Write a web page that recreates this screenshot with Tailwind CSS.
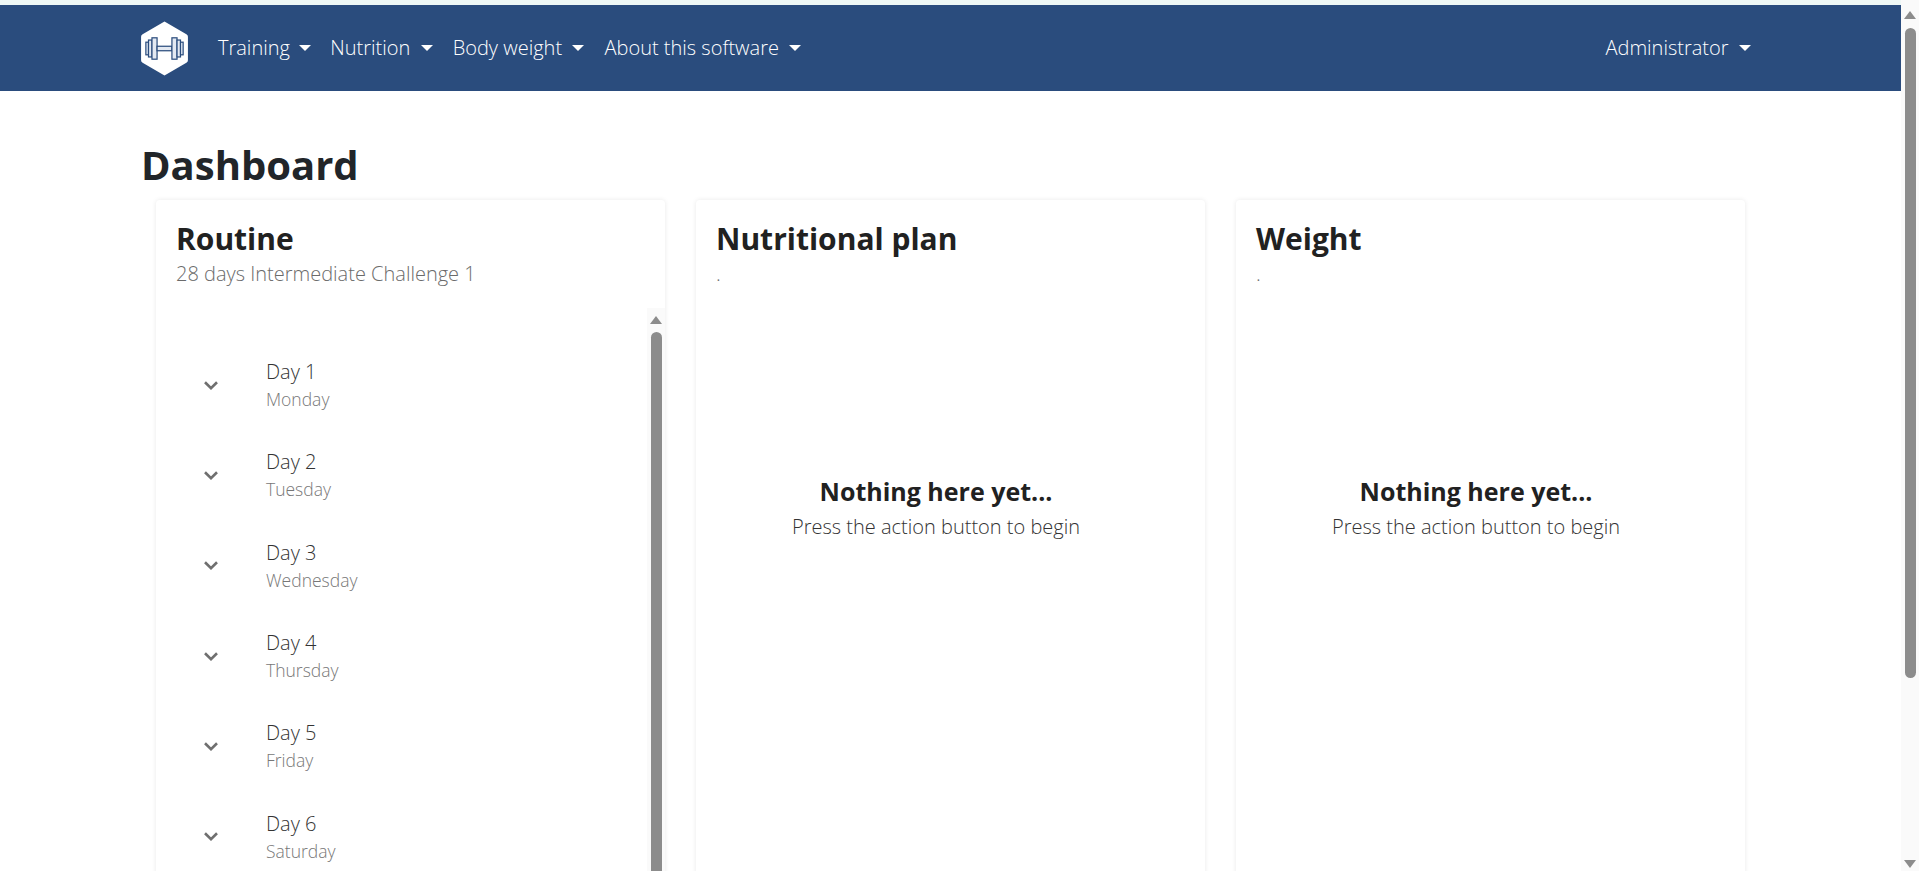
<!DOCTYPE html>
<html lang="en">
<head>
<meta charset="utf-8">
<title>Dashboard</title>
<script src="https://cdn.jsdelivr.net/npm/@tailwindcss/browser@4"></script>
</head>
<body class="h-[871px] w-[1919px] overflow-hidden bg-white font-['Open_Sans',sans-serif] text-[#212529]">
<div class="flex h-[871px] w-[1919px] overflow-hidden">
  <div class="flex h-[871px] w-[1901px] flex-col overflow-hidden">
    <div class="h-[5px] shrink-0 bg-[#eef7f5]"></div>
    <nav class="flex h-[86px] shrink-0 items-center bg-[#2a4c7d] pl-[141px] pr-[150px] text-[20px] font-light text-white">
      <svg class="mr-[30px] h-[55px] w-[47px] shrink-0" viewBox="0 0 46 54">
        <path d="M23 0.5 L44.500 13 Q46 13.800 46 15.500 V38.500 Q46 40.200 44.500 41 L23 53.500 L1.500 41 Q0 40.200 0 38.500 V15.500 Q0 13.800 1.500 13 Z" fill="#fff"/>
        <g fill="#e3e9f2" stroke="#2a4c7d" stroke-width="1.2">
          <rect x="4.700" y="20.800" width="2.600" height="12.400"/>
          <rect x="7.300" y="18.700" width="3.400" height="16.600"/>
          <rect x="10.700" y="16.500" width="5" height="21"/>
          <rect x="15.700" y="24.800" width="14.600" height="4.400"/>
          <rect x="30.300" y="16.500" width="5" height="21"/>
          <rect x="35.300" y="18.700" width="3.400" height="16.600"/>
          <rect x="38.700" y="20.800" width="2.600" height="12.400"/>
        </g>
      </svg>
      <a class="flex items-center">Training<span class="ml-[9.4px] h-0 w-0 border-x-[6px] border-t-[6px] border-x-transparent border-t-white"></span></a>
      <a class="ml-[19px] flex items-center">Nutrition<span class="ml-[10.4px] h-0 w-0 border-x-[6px] border-t-[6px] border-x-transparent border-t-white"></span></a>
      <a class="ml-[20px] flex items-center">Body weight<span class="ml-[10.4px] h-0 w-0 border-x-[6px] border-t-[6px] border-x-transparent border-t-white"></span></a>
      <a class="ml-[20px] flex items-center">About this software<span class="ml-[10.4px] h-0 w-0 border-x-[6px] border-t-[6px] border-x-transparent border-t-white"></span></a>
      <a class="ml-auto flex items-center">Administrator<span class="ml-[10.5px] h-0 w-0 border-x-[6px] border-t-[6px] border-x-transparent border-t-white"></span></a>
    </nav>
    <main class="flex min-h-0 flex-1 flex-col pl-[141px]">
      <h1 class="mt-[50px] h-[59px] shrink-0 text-[40px] font-bold leading-[48px]">Dashboard</h1>
      <div class="flex shrink-0 gap-[31px] pl-[15px]">
        <section class="flex h-[700px] w-[509px] flex-col rounded-[4px] pl-[20px] pt-[20px] shadow-[0_0_5px_rgba(0,0,0,0.09)]">
          <h2 class="text-[30px] font-bold leading-[38px] text-[#212121]">Routine</h2>
          <p class="mt-[2px] text-[20px] font-light leading-[28px] text-[#6b6b6b]">28 days Intermediate Challenge 1</p>
          <div class="mt-[20px] flex min-h-0 flex-1">
            <ul class="flex-1 pt-[32px]">
              <li class="flex h-[90.3px] items-center"><svg class="ml-[28px] mr-[48px] h-[9px] w-[14px] text-[#6f6f6f]" viewBox="0 0 14 9" fill="none" stroke="currentColor" stroke-width="2.6"><path d="M1 1.300 7 7.200 13 1.300"/></svg><div><div class="text-[20px] font-light leading-[28px] text-[#333]">Day 1</div><div class="text-[17.5px] font-light leading-[26px] text-[#777]">Monday</div></div></li>
              <li class="flex h-[90.3px] items-center"><svg class="ml-[28px] mr-[48px] h-[9px] w-[14px] text-[#6f6f6f]" viewBox="0 0 14 9" fill="none" stroke="currentColor" stroke-width="2.6"><path d="M1 1.300 7 7.200 13 1.300"/></svg><div><div class="text-[20px] font-light leading-[28px] text-[#333]">Day 2</div><div class="text-[17.5px] font-light leading-[26px] text-[#777]">Tuesday</div></div></li>
              <li class="flex h-[90.3px] items-center"><svg class="ml-[28px] mr-[48px] h-[9px] w-[14px] text-[#6f6f6f]" viewBox="0 0 14 9" fill="none" stroke="currentColor" stroke-width="2.6"><path d="M1 1.300 7 7.200 13 1.300"/></svg><div><div class="text-[20px] font-light leading-[28px] text-[#333]">Day 3</div><div class="text-[17.5px] font-light leading-[26px] text-[#777]">Wednesday</div></div></li>
              <li class="flex h-[90.3px] items-center"><svg class="ml-[28px] mr-[48px] h-[9px] w-[14px] text-[#6f6f6f]" viewBox="0 0 14 9" fill="none" stroke="currentColor" stroke-width="2.6"><path d="M1 1.300 7 7.200 13 1.300"/></svg><div><div class="text-[20px] font-light leading-[28px] text-[#333]">Day 4</div><div class="text-[17.5px] font-light leading-[26px] text-[#777]">Thursday</div></div></li>
              <li class="flex h-[90.3px] items-center"><svg class="ml-[28px] mr-[48px] h-[9px] w-[14px] text-[#6f6f6f]" viewBox="0 0 14 9" fill="none" stroke="currentColor" stroke-width="2.6"><path d="M1 1.300 7 7.200 13 1.300"/></svg><div><div class="text-[20px] font-light leading-[28px] text-[#333]">Day 5</div><div class="text-[17.5px] font-light leading-[26px] text-[#777]">Friday</div></div></li>
              <li class="flex h-[90.3px] items-center"><svg class="ml-[28px] mr-[48px] h-[9px] w-[14px] text-[#6f6f6f]" viewBox="0 0 14 9" fill="none" stroke="currentColor" stroke-width="2.6"><path d="M1 1.300 7 7.200 13 1.300"/></svg><div><div class="text-[20px] font-light leading-[28px] text-[#333]">Day 6</div><div class="text-[17.5px] font-light leading-[26px] text-[#777]">Saturday</div></div></li>
            </ul>
            <div class="flex w-[18px] flex-col items-center bg-[#fafafa]">
              <div class="mt-[8px] h-0 w-0 border-x-[6px] border-b-[8px] border-x-transparent border-b-[#8c8c8c]"></div>
              <div class="mt-[8px] h-[600px] w-[11px] rounded-t-[6px] bg-[#8c8c8c]"></div>
            </div>
          </div>
        </section>
        <section class="flex h-[700px] w-[509px] flex-col rounded-[4px] pl-[20px] pt-[20px] shadow-[0_0_5px_rgba(0,0,0,0.09)]">
          <h2 class="text-[30px] font-bold leading-[38px] text-[#212121]">Nutritional plan</h2>
          <p class="mt-[2px] text-[20px] font-light leading-[28px] text-[#6b6b6b]">.</p>
          <div class="mt-[186px] flex flex-col items-center pr-[49px]">
            <div class="text-[25px] font-bold leading-[34px] text-[#212121]">Nothing here yet...</div>
            <div class="mt-[4px] text-[20px] font-light leading-[30px] text-[#333]">Press the action button to begin</div>
          </div>
        </section>
        <section class="flex h-[700px] w-[509px] flex-col rounded-[4px] pl-[20px] pt-[20px] shadow-[0_0_5px_rgba(0,0,0,0.09)]">
          <h2 class="text-[30px] font-bold leading-[38px] text-[#212121]">Weight</h2>
          <p class="mt-[2px] text-[20px] font-light leading-[28px] text-[#6b6b6b]">.</p>
          <div class="mt-[186px] flex flex-col items-center pr-[49px]">
            <div class="text-[25px] font-bold leading-[34px] text-[#212121]">Nothing here yet...</div>
            <div class="mt-[4px] text-[20px] font-light leading-[30px] text-[#333]">Press the action button to begin</div>
          </div>
        </section>
      </div>
    </main>
  </div>
  <aside class="flex h-[871px] w-[18px] shrink-0 flex-col items-center bg-[#fafafa]">
    <div class="mt-[11px] h-0 w-0 border-x-[6px] border-b-[8px] border-x-transparent border-b-[#8c8c8c]"></div>
    <div class="mt-[9px] h-[650px] w-[11px] rounded-[6px] bg-[#8c8c8c]"></div>
    <div class="mb-[3px] mt-auto h-0 w-0 border-x-[6px] border-t-[8px] border-x-transparent border-t-[#8c8c8c]"></div>
  </aside>
</div>
</body>
</html>
